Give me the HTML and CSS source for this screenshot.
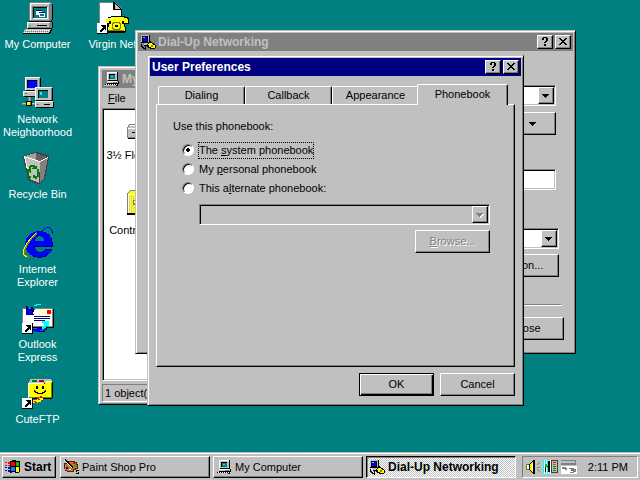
FILE: index.html
```html
<!DOCTYPE html>
<html lang="en">

<head>
    <meta charset="UTF-8">
    <meta name="viewport" content="width=device-width, initial-scale=1.0">
    <title>Desktop</title>
    <link rel="stylesheet" href="styles.css">
</head>

<body>
    <!-- icon sprite -->
    <svg class="sprite">
        <symbol id="shortcut" viewBox="0 0 11 11">
            <path fill="#000" d="M0 0h11v11H0z" />
            <path fill="#fff" d="M0 0h10v10H0z" />
            <path fill="#000" d="M4 2h5v5H8V6H7v1H6v1H5v1H3V7h1V6h1V5h1V4H5V3H4z" />
        </symbol>
        <symbol id="computer" viewBox="0 0 32 32">
            <path fill="#808080" d="M7 1h1V0h21v1h2v17h-1v2H7z" />
            <path fill="#000" d="M30 2h1v16h-1v2H7v-1h22v-1h1z" />
            <path fill="#c0c0c0" d="M8 1h19v17H8z" />
            <path fill="#fff" d="M8 1h20v1H9v16H8z" />
            <path fill="#808080" d="M10 4h16v1H11v12h-1z" />
            <path fill="#000" d="M11 5h14v11H11z" />
            <path fill="#008080" d="M12 6h13v10H12z" />
            <path fill="#fff" d="M25 5h1v12H11v-1h14zM14 8h6v5h-6zM17 10h6v5h-6z" />
            <path fill="#000080" d="M14 8h6v1h-6zM17 10h6v1h-6z" />
            <path fill="#008080" d="M18 12h4v2h-4z" />
            <path fill="#000" d="M6 20h25v6h-1v1H6z" />
            <path fill="#808080" d="M5 20h25v6H5z" />
            <path fill="#c0c0c0" d="M6 21h21v4H6z" />
            <path fill="#fff" d="M5 20h23v1H6v5H5z" />
            <path fill="#00c000" d="M7 23h2v1H7z" />
            <path fill="#000" d="M15 23h10v1H15z" />
            <path fill="#000" d="M3 27h27v2h-1v2h-1v1H1v-2h1v-2h1z" />
            <path fill="#c0c0c0" d="M3 27h26v1h-1v2h-1v1H1v-1h1v-2h1z" />
            <path stroke="#fff" stroke-dasharray="1 1" d="M4 28.5h23M2 30.5h23" />
            <path stroke="#808080" stroke-dasharray="1 1" d="M3 29.5h24" />
        </symbol>
        <symbol id="pc" viewBox="0 0 16 16">
            <path fill="#000" d="M4 1h10v9H4zM3 10h12v3H3z" />
            <path fill="#c0c0c0" d="M3 1h10v8H3zM3 10h11v2H3z" />
            <path fill="#fff" d="M3 1h10v1H4v7H3zM3 10h10v1H3z" />
            <path fill="#000" d="M5 3h6v5H5z" />
            <path fill="#008080" d="M6 4h5v4H6z" />
            <path fill="#00ffff" d="M7 5h2v1H7z" />
            <path fill="#808080" d="M9 11h4v1H9z" />
            <path fill="#000" d="M1 13h13v2H0v-1h1z" />
            <path stroke="#fff" stroke-dasharray="1 1" d="M2 13.5h11" />
            <path fill="#c0c0c0" d="M0 14h12v1H0z" />
        </symbol>
        <symbol id="dialup" viewBox="0 0 16 16">
            <path fill="#000" d="M1 1h9v8H1zM4 7h7v5H4z" />
            <path fill="#c0c0c0" d="M1 1h8v1H2v6H1zM8 2h1v6H8zM4 9h6v2H4z" />
            <path fill="#0000ff" d="M3 3h4v4H3z" />
            <path fill="#00ffff" d="M3 3h2v1H3z" />
            <path fill="#000" d="M8 8h4v1h2v1h1v1h1v3h-1v1h-5v-1H8v-1H7v-3h1z" />
            <path fill="#ffff00" d="M9 9h3v1h1v1h2v3h-4v-1H9v-2H8v-1h1z" />
            <path fill="#808000" d="M11 11h2v2h-2z" />
            <path fill="#000" d="M1 10h1v2h1v1h1v1h2v1H3v-1H2v-1H1zM5 12h1v4H5z" />
        </symbol>
        <symbol id="virgin" viewBox="0 0 32 32">
            <path fill="#808080" d="M2 0h16l7 7v22H2z" />
            <path fill="#fff" d="M3 1h14v7h7v22H3z" />
            <path fill="#000" d="M17 0h1v1h1v1h1v1h1v1h1v1h1v1h1v1h1v22h-1V8h-8V0z" />
            <path fill="#c0c0c0" d="M18 2l5 5h-5z" />
            <path fill="#000" d="M11 15h3v-1h14v1h3v1h1v6h-4v3h1v5h-1v1H9v-5h2v-3H9v-6h2z" />
            <path fill="#ffff00" d="M11 16h3v-1h13v1h3v1h1v4h-4v-2h-3v3h3v3h1v4H10v-4h2v-3h3v-3h-3v2H9v-4h2z" />
            <path fill="#ffff00" d="M14 19h11v9H14z" />
            <path fill="#fff" d="M12 16h4v1h-4zM12 24h2v1h-2z" />
            <path fill="#808000" d="M16 20h7v1h1v6h-1v1h-7v-1h-1v-6h1zM11 28h16v1H11z" />
            <path fill="#ffff00" d="M17 21h5v1h1v4h-1v1h-5v-1h-1v-4h1z" />
            <path fill="#000" d="M18 23h3v2h-3z" />
            <use href="#shortcut" x="0" y="21" width="11" height="11" />
        </symbol>
        <symbol id="network" viewBox="0 0 32 32">
            <path fill="#000" d="M4 1h15v13H4zM2 15h17v5H2z" />
            <path fill="#c0c0c0" d="M3 0h15v13H3zM1 14h17v5H1z" />
            <path fill="#fff" d="M3 0h15v1H4v12H3zM1 14h17v1H2v4H1z" />
            <path fill="#808080" d="M17 1h1v12h-1zM5 3h11v8H5z" />
            <path fill="#000" d="M5 3h10v8H5z" />
            <path fill="#0000ff" d="M6 4h9v7H6z" />
            <path fill="#00c000" d="M3 16h2v1H3z" />
            <path fill="#808080" d="M6 20h3v5H6zM0 26h13v2H0z" />
            <path fill="#c0c0c0" d="M7 20h1v5H7zM0 26h13v1H0z" />
            <path fill="#000" d="M4 24h6v5H4z" />
            <path fill="#ffff00" d="M5 25h3v3H5z" />
            <path fill="#808000" d="M8 25h1v3H8z" />
            <path fill="#000" d="M14 11h17v13H14zM14 25h18v6H14z" />
            <path fill="#c0c0c0" d="M13 10h17v13H13zM13 24h18v6H13z" />
            <path fill="#fff" d="M13 10h17v1H14v12h-1zM13 24h18v1H14v5h-1z" />
            <path fill="#808080" d="M29 11h1v12h-1z" />
            <path fill="#000" d="M16 13h10v8H16z" />
            <path fill="#008080" d="M17 14h9v7h-9z" />
            <path fill="#00ffff" d="M18 15h2v3h-2z" />
            <path fill="#00c000" d="M15 27h2v1h-2z" />
            <path fill="#000" d="M22 27h6v1h-6z" />
        </symbol>
        <symbol id="recycle" viewBox="0 0 32 32">
            <path fill="#404040" d="M13 0h2l12 4v3l-4 20-6 5h-1L6 28 1 5V4z" />
            <path fill="#c0c0c0" d="M2 5l16 5-1 21-9-4z" />
            <path fill="#808080" d="M18 10l8-4-4 20-4 4z" />
            <path fill="#a0a0a0" d="M3 4l11-3v7z" />
            <path fill="#606060" d="M14 1l11 4-7 4-4-1z" />
            <path fill="none" stroke="#fff" d="M2 4.500l16 5 8-4M2.500 5l5 21" />
            <path fill="#008000" d="M8 13h5v1h2v3h-5v-1h1v-1H9v2H7v-3h1zM5 17h4v4H8v-1H7v4h2v2H7v-1H6v-4H5zM15 17h2v8h-2v2h-2v-1h-2v-3h2v1h2z" />
        </symbol>
        <symbol id="ie" viewBox="0 0 32 32">
            <path fill="#000080" d="M18 4c8 0 13 6 13 14v2H13c0 3 2 5 5 5 2 0 4-1 5-3h7c-2 6-7 9-12 9C9 31 4 25 4 18S10 4 18 4zm-5 10h10c0-3-2-5-5-5s-5 2-5 5z" />
            <path fill="#0000ff" d="M17 4c8 0 13 6 13 13v2H12c0 4 2 7 6 7 2 0 4-1 5-3h7c-3 5-8 7-13 7C8 30 3 24 3 17S9 4 17 4zm-5 10h10c0-3-2-5-5-5s-5 2-5 5z" />
            <path fill="none" stroke="#0000ff" stroke-width="1" d="M20 4c4-5 11-5 10 3" />
            <path fill="none" stroke="#808000" stroke-width="2" d="M15 6C7 12 2 21 2 28l5 2" />
            <path fill="none" stroke="#ffff00" d="M14 6C7 12 1 21 1 27l4 3" />
        </symbol>
        <symbol id="outlook" viewBox="0 0 32 32">
            <path fill="#000" d="M1 7h31v19H1z" />
            <path fill="#808080" d="M0 6h31v19H0z" />
            <path fill="#fff" d="M1 7h29v17H1z" />
            <path stroke="#ffff00" stroke-dasharray="1 2" d="M18 8.500h12M20 10.500h10M17 12.500h12M19 14.500h10M24 19.500h6M23 22.500h7" />
            <path fill="#ff0000" d="M25 8h4v4h-4z" />
            <path fill="#000080" d="M12 14h16v1H12zM12 16h16v1H12zM12 18h11v1H12z" />
            <path fill="#008080" d="M10 4h2V2h2V1h5v1h2v3h-2V4h-4v1h-2v3h-3z" />
            <path fill="#00ffff" d="M12 3h2V2h5v1h-4v1h-3z" />
            <path fill="#000080" d="M4 4h2v2h1v1h2V5h2v2h1v3h-1v2h1v1H4z" />
            <path fill="#0000ff" d="M5 7h1v1h2v1h2v2H8v1H5z" />
            <path fill="#00ffff" d="M20 19h7v6h-1v-1h-2v2h-2v1h-2v-3h2v-2h-1v-1h-1z" />
            <path fill="#0000ff" d="M11 27h4v-1h5v2h-2v2h-5v-1h-2z" />
            <path fill="#000080" d="M15 29h6v-1h2v-2h2v2h-2v2h-7z" />
            <use href="#shortcut" x="0" y="21" width="11" height="11" />
        </symbol>
        <symbol id="cuteftp" viewBox="0 0 32 32">
            <path fill="#000" d="M8 3h22v2h1v16h-1v1H8z" />
            <path fill="#c0c0c0" d="M6 6h1V4h1V2h21v1h1v3H6z" />
            <path fill="#008000" d="M10 3h5v2h-5z" />
            <path fill="#c00000" d="M17 3h5v2h-5z" />
            <path fill="#ffff00" d="M7 7h16V5h7v15H7z" />
            <path fill="#fff" d="M6 6h16v1H7v14H6zM24 4h5v1h-5z" />
            <path fill="#808000" d="M29 6h1v15H8v-1h21z" />
            <path fill="#000" d="M14 9h2v3h-2zM20 9h2v3h-2zM12 13h1v1h1v1h2v1h4v-1h2v-1h1v-1h1v2h-1v1h-2v1h-6v-1h-2v-1h-1z" />
            <path fill="#ffff00" d="M15 21h6v2h-2v2h-3v1h-5v-3h4z" />
            <path fill="#ff0000" d="M14 20h2v1h1v1h1v1h-2v-1h-1v-1h-1zM12 24h2v1h1v1h-2v-1h-1zM18 19h2v2h-2z" />
            <use href="#shortcut" x="0" y="21" width="11" height="11" />
        </symbol>
        <symbol id="floppy" viewBox="0 0 32 32">
            <path fill="#808080" d="M2 11h27v14H0V14h1v-2h1z" />
            <path fill="#c0c0c0" d="M2 12h27v3H1v-1h1zM1 16h28v8H1z" />
            <path fill="#fff" d="M3 12h26v1H3zM1 15h28v1H1z" />
            <path fill="#000" d="M5 19h20v1H5zM1 25h28v1H1z" />
        </symbol>
        <symbol id="folder" viewBox="0 0 32 32">
            <path fill="#808080" d="M3 2h11v2h16v22H0V5h1V4h1V3h1z" />
            <path fill="#ffff00" d="M3 3h10v2h16v2H1V5h1V4h1zM2 7h27v18H2z" />
            <path stroke="#c0c0c0" stroke-width="17" stroke-dasharray="1 1" stroke-opacity=".5" d="M2 16.500h27" />
            <path fill="#fff" d="M1 6h28v1H2v18H1z" />
            <path fill="#000" d="M0 25h30v2H0z" />
            <path fill="#808080" d="M6 12h3v-1h8v5H9v1H6z" />
            <path fill="#fff" d="M7 13h2v2H7z" />
        </symbol>
        <symbol id="flag" viewBox="0 0 16 16">
            <path fill="#000" d="M5 2h2V1h4v1h4v11h-1v1h-4v-1H7v1H5z" />
            <path fill="#ff0000" d="M6 3h4v4H6z" />
            <path fill="#00c000" d="M11 3h3v4h-3z" />
            <path fill="#0080ff" d="M6 8h4v4H6z" />
            <path fill="#ffff00" d="M11 8h3v5h-3z" />
            <path fill="#ff0000" d="M0 3h2v1H0zM3 3h2v2H3zM0 6h2v1H0zM3 6h2v1H3z" />
            <path fill="#0000ff" d="M0 8h2v1H0zM3 8h2v2H3zM0 11h2v1H0zM3 11h2v2H3z" />
        </symbol>
        <symbol id="palette" viewBox="0 0 16 16">
            <path fill="#602000" d="M3 2h9v1h2v2h1v5h-2v1h-2v2H4v-1H2v-2H1V4h2z" />
            <path fill="#c07830" d="M4 3h8v1h1v2h1v3h-2v1h-2v2H4v-1H2V5h2z" />
            <path fill="#ff0000" d="M10 3h2v2h-2z" />
            <path fill="#00c000" d="M11 6h2v2h-2z" />
            <path fill="#0000ff" d="M3 8h2v2H3z" />
            <path fill="#ffff00" d="M6 10h2v1H6z" />
            <path stroke="#000" stroke-width="2" d="M2 1l8 8" />
            <path stroke="#fff" d="M1 1l8 8" />
            <path fill="#000" d="M13 11h3v1h-2v1h2v2h-3v-1h2v-1h-2z" />
        </symbol>
        <symbol id="speaker" viewBox="0 0 16 16">
            <path fill="#000" d="M8 1h2v14H8v-1H7v-1H6v-1H5v-1H1V5h4V4h1V3h1V2h1z" />
            <path fill="#808000" d="M1 5h3v6H1z" />
            <path fill="#ffff00" d="M5 5h1V4h1V3h1v10H7v-1H6v-1H5z" />
            <path fill="#fff" d="M2 6h2v4H2zM7 5h1v5H7z" />
            <path fill="#808080" d="M12 5h1V4h1V3h1v1h-1v1h-1v1h-1zM12 8h3v1h-3zM12 10h1v1h1v1h1v1h-1v-1h-1v-1h-1z" />
        </symbol>
        <symbol id="mixer" viewBox="0 0 16 16">
            <path fill="#fff" d="M0 1h9v14H0z" />
            <path stroke="#00ffff" stroke-width="14" stroke-dasharray="1 1" d="M0 8h9" />
            <path fill="#000" d="M5 2h2v11H5zM2 6h1v7H2zM2 7h4v1H2z" />
            <path fill="#00c000" d="M2 5h2v3H2z" />
            <path fill="#404040" d="M8 1h7v13H8z" />
            <path fill="#c0c0c0" d="M9 2h5v11H9z" />
            <path fill="#ff0000" d="M10 3h3v1h-3z" />
            <path fill="#808000" d="M10 5h3v1h-3z" />
            <path fill="#008000" d="M10 7h3v1h-3zM10 9h3v1h-3zM10 11h3v1h-3z" />
        </symbol>
        <symbol id="modem" viewBox="0 0 16 16">
            <path fill="#808080" d="M0 1h15v5H0z" />
            <path fill="#c0c0c0" d="M0 2h14v2H0z" />
            <path fill="#fff" d="M0 7h16v8H0z" />
            <path fill="#808080" d="M1 8h4v1h1v2H4v-1H1zM8 9h5v1h2v3h-2v1H9v-1h3v-3H8z" />
            <path fill="#808000" d="M10 10h2v2h-2z" />
        </symbol>
        <symbol id="help" viewBox="0 0 10 10">
            <path fill="#000" d="M3 0h4v1h1v3H7v1H6v1H4V5h1V4h1V1H4v2H2V1h1zM4 7h2v2H4z" />
        </symbol>
        <symbol id="cross" viewBox="0 0 10 10">
            <path fill="#000" d="M1 1h2v1h1v1h2V2h1V1h2v1H8v1H7v1H6v1h1v1h1v1h1v1H7V7H6V6H4v1H3v1H1V7h1V6h1V5h1V4H3V3H2V2H1z" />
        </symbol>
        <symbol id="down" viewBox="0 0 8 8">
            <path fill="currentColor" d="M0 2h7v1H6v1H5v1H4v1H3V5H2V4H1V3H0z" />
        </symbol>
    </svg>

    <div class="desktop">
        <div class="shortcuts">
            <a class="shortcut" href="#"><svg><use href="#computer" /></svg><span>My Computer</span></a>
            <a class="shortcut" href="#"><svg><use href="#network" /></svg><span>Network Neighborhood</span></a>
            <a class="shortcut" href="#"><svg><use href="#recycle" /></svg><span>Recycle Bin</span></a>
            <a class="shortcut" href="#"><svg><use href="#ie" /></svg><span>Internet<br>Explorer</span></a>
            <a class="shortcut" href="#"><svg><use href="#outlook" /></svg><span>Outlook<br>Express</span></a>
            <a class="shortcut" href="#"><svg><use href="#cuteftp" /></svg><span>CuteFTP</span></a>
            <a class="shortcut" href="#"><svg><use href="#virgin" /></svg><span>Virgin Net</span></a>
        </div>

        <!-- My Computer -->
        <div class="window explorer">
            <div class="titlebar">
                <svg class="small-icon"><use href="#pc" /></svg>
                <span>My Computer</span>
            </div>
            <div class="menu"><button><u>F</u>ile</button></div>
            <div class="files sunken">
                <a class="file" href="#"><svg><use href="#floppy" /></svg><span>3½ Floppy (A:)</span></a>
                <a class="file" href="#"><svg><use href="#folder" /></svg><span>Control Panel</span></a>
            </div>
            <div class="status">1 object(s)</div>
        </div>

        <!-- Dial-Up Networking -->
        <div class="window dialup">
            <div class="titlebar">
                <svg class="small-icon"><use href="#dialup" /></svg>
                <span>Dial-Up Networking</span>
                <button class="tool" aria-label="Help"><svg><use href="#help" /></svg></button>
                <button class="tool" aria-label="Close"><svg><use href="#cross" /></svg></button>
            </div>
            <div class="entry">
                <div class="combo white sunken">
                    <select aria-label="Entry"></select>
                    <span class="arrow"><svg><use href="#down" /></svg></span>
                </div>
                <button class="button more" aria-label="More"><svg><use href="#down" /></svg></button>
                <input class="number sunken" type="text" aria-label="Number">
            </div>
            <div class="location">
                <div class="combo white sunken">
                    <select aria-label="Location"></select>
                    <span class="arrow"><svg><use href="#down" /></svg></span>
                </div>
                <button class="button">Location...</button>
            </div>
            <hr>
            <div class="closing"><button class="button">Close</button></div>
        </div>

        <!-- User Preferences -->
        <div class="window prefs">
            <div class="titlebar active">
                <span>User Preferences</span>
                <button class="tool" aria-label="Help"><svg><use href="#help" /></svg></button>
                <button class="tool" aria-label="Close"><svg><use href="#cross" /></svg></button>
            </div>
            <form class="content">
                <div class="tabs" role="tablist">
                    <button type="button" class="tab" role="tab">Dialing</button>
                    <button type="button" class="tab" role="tab">Callback</button>
                    <button type="button" class="tab" role="tab">Appearance</button>
                    <button type="button" class="tab selected" role="tab" aria-selected="true">Phonebook</button>
                </div>
                <div class="panel">
                    <p>Use this phonebook:</p>
                    <div class="options">
                        <div class="option">
                            <input type="radio" name="book" id="system" checked>
                            <label class="focused" for="system">The <u>s</u>ystem phonebook</label>
                        </div>
                        <div class="option">
                            <input type="radio" name="book" id="personal">
                            <label for="personal">My <u>p</u>ersonal phonebook</label>
                        </div>
                        <div class="option">
                            <input type="radio" name="book" id="alternate">
                            <label for="alternate">This a<u>l</u>ternate phonebook:</label>
                        </div>
                    </div>
                    <div class="alternate">
                        <div class="combo sunken">
                            <select aria-label="Alternate phonebook" disabled></select>
                            <span class="arrow disabled"><svg><use href="#down" /></svg></span>
                        </div>
                        <button type="button" class="button" disabled><u>B</u>rowse...</button>
                    </div>
                </div>
                <div class="actions">
                    <button type="button" class="button default">OK</button>
                    <button type="button" class="button">Cancel</button>
                </div>
            </form>
        </div>
    </div>

    <div class="taskbar">
        <button class="task start"><svg class="small-icon"><use href="#flag" /></svg>Start</button>
        <div class="tasks">
            <button class="task"><svg class="small-icon"><use href="#palette" /></svg>Paint Shop Pro</button>
            <button class="task"><svg class="small-icon"><use href="#pc" /></svg>My Computer</button>
            <button class="task pressed"><svg class="small-icon"><use href="#dialup" /></svg>Dial-Up Networking</button>
        </div>
        <div class="tray">
            <svg class="small-icon"><use href="#speaker" /></svg>
            <svg class="small-icon"><use href="#mixer" /></svg>
            <svg class="small-icon"><use href="#modem" /></svg>
            <span>2:11 PM</span>
        </div>
    </div>
</body>

</html>
```

FILE: styles.css
```css
* {
    margin: 0;
    padding: 0;
    box-sizing: border-box;
}

body {
    display: flex;
    flex-direction: column;
    height: 100vh;
    overflow: hidden;
    background-color: #008080;
    color: #000;
    font-family: "Liberation Sans", Arial, sans-serif;
    font-size: 11px;
    line-height: 13px;
}

button,
input,
select {
    font: inherit;
    color: inherit;
    border: none;
    border-radius: 0;
    outline: none;
    background: none;
    appearance: none;
}

a {
    color: inherit;
    text-decoration: none;
}

svg {
    display: block;
    flex: none;
    shape-rendering: crispEdges;
}

.sprite {
    position: absolute;
    width: 0;
    height: 0;
}

.small-icon {
    width: 16px;
    height: 16px;
}

/* desktop */

.desktop {
    position: relative;
    flex: 1;
    min-height: 0;
}

.shortcuts {
    display: grid;
    grid-auto-flow: column;
    grid-template-rows: repeat(6, 75px);
    grid-auto-columns: 75px;
}

.shortcut,
.file {
    display: flex;
    flex-direction: column;
    align-items: center;
    gap: 4px;
    padding-top: 2px;
    text-align: center;
}

.shortcut {
    color: #fff;
}

.shortcut svg,
.file svg {
    width: 32px;
    height: 32px;
}

/* windows */

.window {
    position: absolute;
    display: flex;
    flex-direction: column;
    padding: 2px;
    background-color: #c0c0c0;
    border: 1px solid;
    border-color: #c0c0c0 #000 #000 #c0c0c0;
    box-shadow: inset 1px 1px #fff, inset -1px -1px #808080;
}

.titlebar {
    display: flex;
    align-items: center;
    gap: 2px;
    height: 18px;
    padding: 0 2px;
    background-color: #808080;
    color: #c0c0c0;
    font-size: 12px;
    font-weight: bold;
}

.titlebar.active {
    background-color: #000080;
    color: #fff;
}

.titlebar span {
    flex: 1;
    white-space: nowrap;
}

.button,
.tool,
.arrow,
.task {
    background-color: #c0c0c0;
    border: 1px solid;
    border-color: #fff #000 #000 #fff;
    box-shadow: inset -1px -1px #808080;
}

.sunken {
    border: 1px solid;
    border-color: #808080 #fff #fff #808080;
    box-shadow: inset 1px 1px #000, inset -1px -1px #c0c0c0;
}

.tool {
    display: flex;
    align-items: center;
    justify-content: center;
    width: 16px;
    height: 14px;
}

.tool svg {
    width: 10px;
    height: 10px;
}

.button {
    min-width: 75px;
    height: 23px;
}

.button.default {
    border-color: #000;
    box-shadow: inset 1px 1px #fff, inset -1px -1px #000, inset -2px -2px #808080;
}

.button:disabled {
    color: #808080;
    text-shadow: 1px 1px #fff;
}

.combo {
    display: flex;
    height: 21px;
    padding: 1px;
}

.combo.white {
    background-color: #fff;
}

.combo select {
    flex: 1;
    min-width: 0;
}

.arrow {
    display: flex;
    align-items: center;
    justify-content: center;
    width: 16px;
}

.arrow svg,
.more svg {
    width: 8px;
    height: 8px;
}

.arrow.disabled {
    color: #808080;
}

.arrow.disabled svg {
    filter: drop-shadow(1px 1px #fff);
}

/* My Computer */

.explorer {
    left: 98px;
    top: 66px;
    width: 300px;
    height: 339px;
    padding: 3px 3px 2px;
}

.menu {
    height: 20px;
    padding: 4px 6px;
}

.files {
    flex: 1;
    padding: 2px;
    background-color: #fff;
}

.file {
    width: 75px;
    height: 75px;
    white-space: nowrap;
}

.status {
    height: 18px;
    margin-top: 3px;
    padding: 2px;
    border: 1px solid;
    border-color: #808080 #fff #fff #808080;
}

/* Dial-Up Networking */

.dialup {
    left: 135px;
    top: 30px;
    width: 441px;
    height: 324px;
}

.entry,
.location {
    display: flex;
    flex-direction: column;
    align-items: flex-end;
}

.entry {
    padding: 34px 17px 0 12px;
}

.dialup .combo,
.number {
    width: 100%;
}

.more {
    display: flex;
    align-items: center;
    justify-content: flex-end;
    margin-top: 6px;
    padding-right: 18px;
}

.number {
    height: 21px;
    margin-top: 34px;
    background-color: #fff;
}

.location {
    padding: 38px 14px 0 12px;
}

.location .button {
    width: 82px;
    margin-top: 5px;
}

.dialup hr {
    margin: 27px 11px 11px;
    border: 1px solid;
    border-color: #808080 #fff #fff #808080;
}

.closing {
    padding-right: 9px;
    text-align: right;
}

/* User Preferences */

.prefs {
    left: 147px;
    top: 55px;
    width: 377px;
}

.content {
    padding: 8px 6px 7px;
}

.tabs {
    display: flex;
    align-items: flex-end;
    height: 20px;
    padding-left: 2px;
}

.tab {
    width: 87px;
    height: 18px;
    border: 1px solid;
    border-color: #fff #000 transparent #fff;
    border-bottom: none;
    border-radius: 2px 2px 0 0;
    box-shadow: inset -1px 0 #808080;
    background-color: #c0c0c0;
}

.tab.selected {
    position: relative;
    width: 91px;
    height: 21px;
    margin: 0 -2px -1px;
    padding-bottom: 2px;
}

.panel {
    min-height: 263px;
    padding: 15px 24px 0 16px;
    border: 1px solid;
    border-color: #fff #000 #000 #fff;
    box-shadow: inset -1px -1px #808080;
}

.options {
    display: flex;
    flex-direction: column;
    gap: 2px;
    margin: 9px 0 7px 9px;
}

.option {
    display: flex;
    align-items: center;
    gap: 4px;
    height: 17px;
}

.option label {
    padding: 2px 1px;
}

.option label.focused {
    outline: 1px dotted #000;
    outline-offset: -1px;
}

.option input {
    width: 12px;
    height: 12px;
    margin-bottom: 2px;
    border: 1px solid;
    border-color: #808080 #fff #fff #808080;
    border-radius: 50%;
    background-color: #fff;
    box-shadow: inset 1px 1px #000;
}

.option input:checked {
    background-image: radial-gradient(circle, #000 2px, transparent 2px);
}

.alternate {
    display: flex;
    flex-direction: column;
    gap: 5px;
    margin-left: 26px;
}

.alternate .button {
    align-self: flex-end;
}

.actions {
    display: flex;
    justify-content: flex-end;
    gap: 6px;
    margin-top: 6px;
}

/* taskbar */

.taskbar {
    display: flex;
    gap: 4px;
    height: 28px;
    padding: 3px 2px 2px;
    background-color: #c0c0c0;
    border-top: 1px solid #c0c0c0;
    box-shadow: inset 0 1px #fff;
}

.task {
    display: flex;
    align-items: center;
    gap: 3px;
    padding: 0 2px;
    height: 22px;
    white-space: nowrap;
}

.start {
    width: 54px;
    font-size: 12px;
    font-weight: bold;
}

.tasks {
    display: flex;
    flex: 1;
    gap: 3px;
}

.tasks .task {
    flex: 0 1 150px;
}

.task.pressed {
    background: repeating-conic-gradient(#fff 0 25%, #c0c0c0 0 50%) 0 0 / 2px 2px;
    border-color: #000 #fff #fff #000;
    box-shadow: inset 1px 1px #808080;
    font-size: 12px;
    font-weight: bold;
}

.tray {
    display: flex;
    align-items: center;
    gap: 2px;
    height: 22px;
    padding: 0 9px 0 2px;
    border: 1px solid;
    border-color: #808080 #fff #fff #808080;
    white-space: nowrap;
}

.tray span {
    margin-left: auto;
    padding-left: 9px;
}
```
